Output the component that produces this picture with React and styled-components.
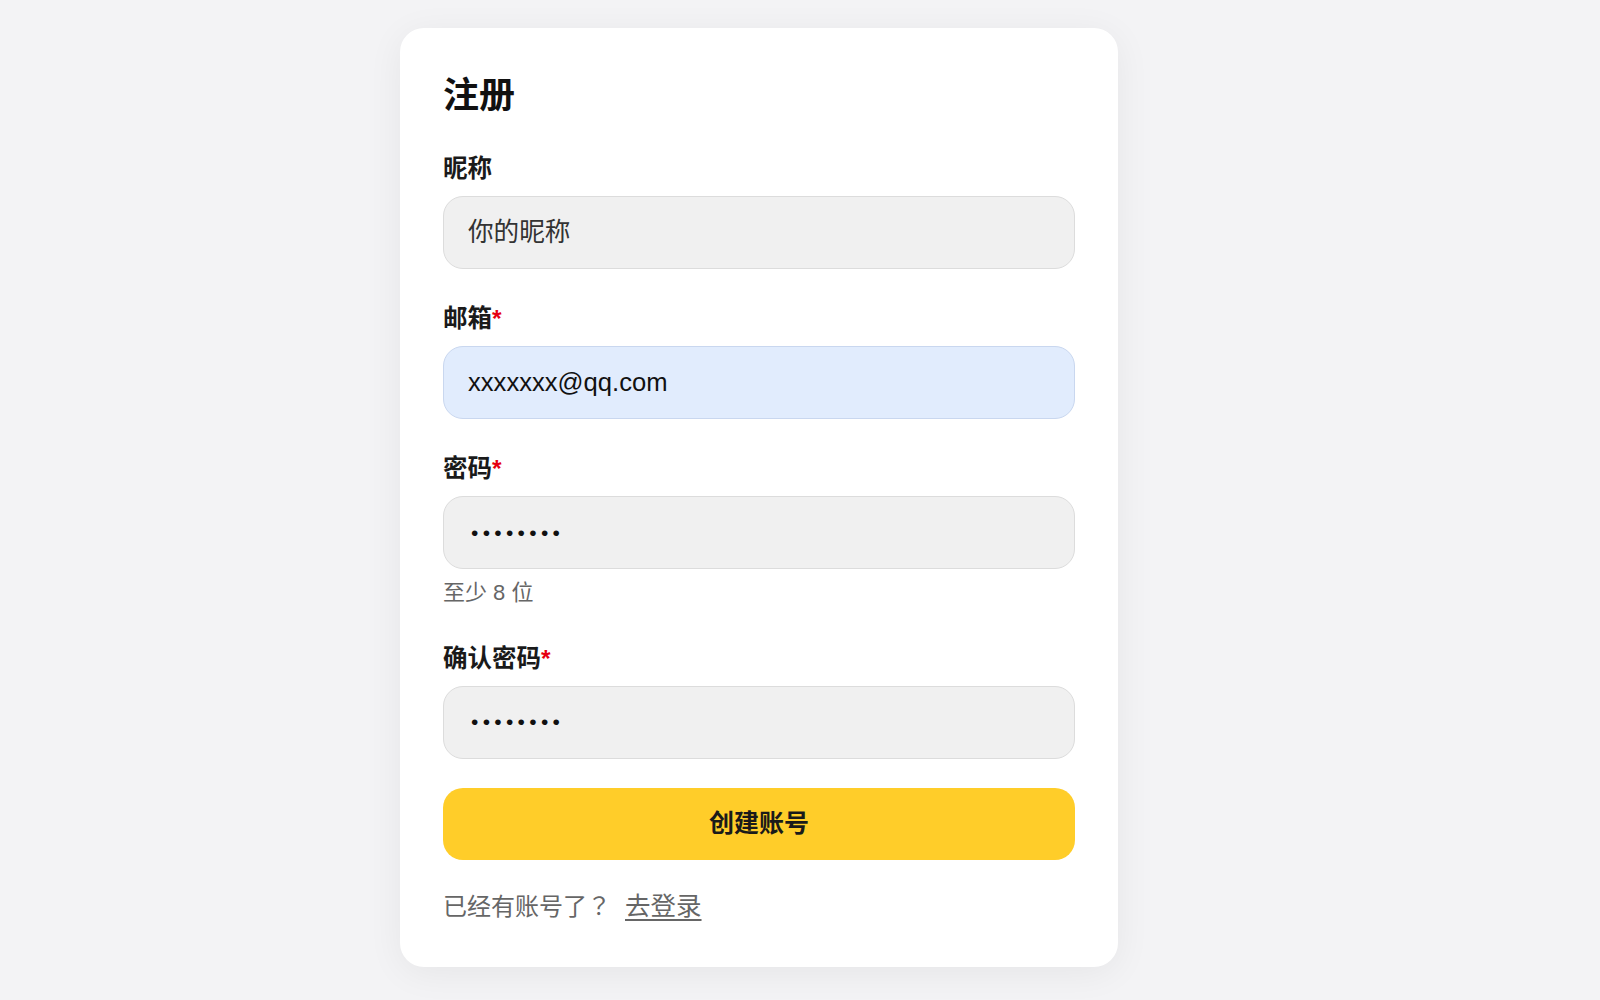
import styled, { createGlobalStyle } from 'styled-components';

const GlobalStyle = createGlobalStyle`
  html,
  body {
    margin: 0;
    padding: 0;
    background-color: #f3f3f5;
  }

  body {
    font-family: 'Liberation Sans', 'Noto Sans CJK SC', sans-serif;
    color: #111;
  }

  * {
    box-sizing: border-box;
  }
`;

const Page = styled.div`
  min-height: 100vh;
  display: flex;
  align-items: flex-start;
  padding: 28px 0 32px 400px;
`;

const Card = styled.div`
  width: 718px;
  padding: 44px 43px 42px;
  background-color: #fff;
  border-radius: 24px;
  box-shadow: 0 6px 36px rgba(0, 0, 0, 0.06);
  display: flex;
  flex-direction: column;
`;

const Title = styled.h1`
  margin: 0 0 28px;
  font-size: 36px;
  line-height: 48px;
  font-weight: 700;
  color: #111;
`;

const Form = styled.form`
  display: flex;
  flex-direction: column;
  gap: 29px;
  margin: 0;
`;

const Field = styled.div`
  display: flex;
  flex-direction: column;
`;

const Label = styled.label`
  padding-top: 3px;
  margin-bottom: 9px;
  font-size: 24.5px;
  line-height: 36px;
  font-weight: 600;
  color: #1a1a1a;
`;

const Required = styled.span`
  color: #e60012;
  font-weight: 700;
`;

const Input = styled.input`
  width: 100%;
  height: 73px;
  padding: 0 24px 0 ${(props) => (props.$secret ? '27px' : '24px')};
  border: 1px solid ${(props) => (props.$filled ? '#c9d7ef' : '#dcdcdc')};
  border-radius: 20px;
  background-color: ${(props) => (props.$filled ? '#e1ecfd' : '#f0f0f0')};
  font-family: 'Liberation Sans', 'Noto Sans CJK SC', sans-serif;
  font-size: ${(props) => (props.$secret ? '21px' : '25.6px')};
  letter-spacing: ${(props) => (props.$secret ? '4.3px' : 'normal')};
  color: #111;
  outline: none;

  &::placeholder {
    color: #333;
    opacity: 1;
  }
`;

const Hint = styled.p`
  margin: 9px 0 0;
  font-size: 22px;
  line-height: 30.5px;
  color: #666;
`;

const SubmitButton = styled.button`
  width: 100%;
  height: 72px;
  padding: 0 0 5px;
  border: none;
  border-radius: 20px;
  background-color: #ffcd29;
  font-family: 'Liberation Sans', 'Noto Sans CJK SC', sans-serif;
  font-size: 25px;
  font-weight: 700;
  color: #1a1a1a;
  cursor: pointer;
`;

const Footer = styled.p`
  margin: 27px 0 0;
  font-size: 24px;
  line-height: 36px;
  color: #666;
`;

const Question = styled.span`
  font-family: 'Noto Sans CJK TC', sans-serif;
`;

const LoginLink = styled.a`
  margin-left: 14px;
  font-size: 25.5px;
  color: #666;
  text-decoration: underline;
  text-decoration-thickness: 2px;
  text-underline-offset: 4px;
  cursor: pointer;
`;

function FormField({ id, label, required, hint, ...inputProps }) {
  return (
    <Field>
      <Label htmlFor={id}>
        {label}
        {required && <Required>*</Required>}
      </Label>
      <Input id={id} {...inputProps} />
      {hint && <Hint>{hint}</Hint>}
    </Field>
  );
}

function App() {
  return (
    <>
      <GlobalStyle />
      <Page>
        <Card>
          <Title>注册</Title>
          <Form onSubmit={(e) => e.preventDefault()}>
            <FormField id="nickname" label="昵称" placeholder="你的昵称" />
            <FormField
              id="email"
              label="邮箱"
              required
              type="email"
              defaultValue="xxxxxxx@qq.com"
              $filled
            />
            <FormField
              id="password"
              label="密码"
              required
              type="password"
              defaultValue="12345678"
              hint="至少 8 位"
              $secret
            />
            <FormField
              id="confirm"
              label="确认密码"
              required
              type="password"
              defaultValue="12345678"
              $secret
            />
            <SubmitButton type="submit">创建账号</SubmitButton>
          </Form>
          <Footer>
            已经有账号了<Question>？</Question>
            <LoginLink>去登录</LoginLink>
          </Footer>
        </Card>
      </Page>
    </>
  );
}

export default App;
